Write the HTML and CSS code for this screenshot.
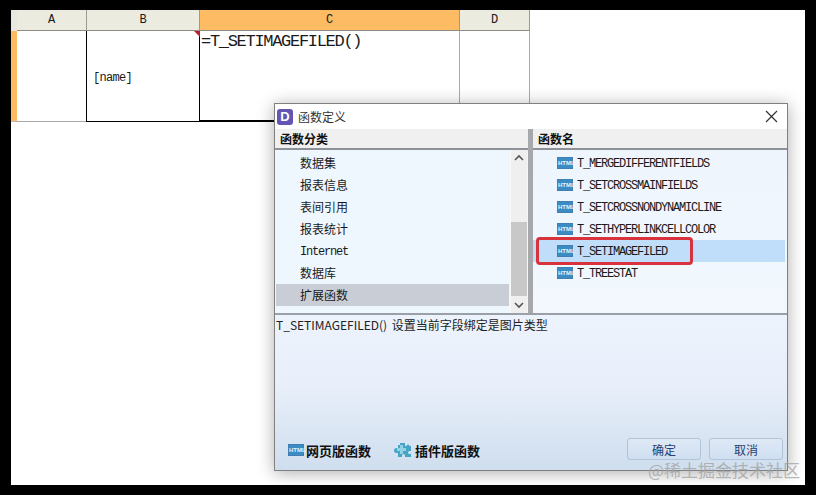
FILE: index.html
```html
<!DOCTYPE html>
<html lang="en">
<head>
    <meta charset="UTF-8">
    <title>函数定义</title>
    <link rel="stylesheet" href="styles.css">
</head>
<body>
    <div class="screen">
        <!-- Sheet behind the dialog -->
        <div class="sheet">
            <div class="corner"></div>
            <div class="col-head">A</div>
            <div class="col-head">B</div>
            <div class="col-head active">C</div>
            <div class="col-head">D</div>
            <div class="row-head"></div>
            <div class="cell"></div>
            <div class="cell name-cell">[name]</div>
            <div class="cell formula-cell">=T_SETIMAGEFILED()<span class="flag"></span></div>
            <div class="cell"></div>
        </div>

        <!-- Function dialog -->
        <div class="dialog">
            <div class="title-bar">
                <span class="logo">D</span>
                <span class="title">函数定义</span>
                <svg class="close" width="13" height="13" viewBox="0 0 13 13">
                    <path d="M1 1L12 12M12 1L1 12" stroke="#333" stroke-width="1.2" fill="none"/>
                </svg>
            </div>
            <div class="panels">
                <div class="panel left-panel">
                    <div class="panel-head">函数分类</div>
                    <div class="list-wrap">
                        <ul class="list">
                            <li>数据集</li>
                            <li>报表信息</li>
                            <li>表间引用</li>
                            <li>报表统计</li>
                            <li class="latin">Internet</li>
                            <li>数据库</li>
                            <li class="selected">扩展函数</li>
                        </ul>
                        <div class="scrollbar">
                            <svg width="16" height="16" viewBox="0 0 16 16"><path d="M4 10L8 6L12 10" stroke="#555" stroke-width="1.6" fill="none"/></svg>
                            <div class="thumb"></div>
                            <svg width="16" height="16" viewBox="0 0 16 16"><path d="M4 6L8 10L12 6" stroke="#555" stroke-width="1.6" fill="none"/></svg>
                        </div>
                    </div>
                </div>
                <div class="splitter"></div>
                <div class="panel right-panel">
                    <div class="panel-head">函数名</div>
                    <ul class="list names">
                        <li><span class="html-icon">HTML</span>T_MERGEDIFFERENTFIELDS</li>
                        <li><span class="html-icon">HTML</span>T_SETCROSSMAINFIELDS</li>
                        <li><span class="html-icon">HTML</span>T_SETCROSSNONDYNAMICLINE</li>
                        <li><span class="html-icon">HTML</span>T_SETHYPERLINKCELLCOLOR</li>
                        <li class="current"><span class="html-icon">HTML</span>T_SETIMAGEFILED<span class="red-box"></span></li>
                        <li><span class="html-icon">HTML</span>T_TREESTAT</li>
                    </ul>
                </div>
            </div>
            <div class="bottom">
                <p class="desc">T_SETIMAGEFILED() 设置当前字段绑定是图片类型</p>
                <div class="actions">
                    <a class="link"><span class="html-icon">HTML</span>网页版函数</a>
                    <a class="link plugin">
                        <svg width="17" height="16" viewBox="0 0 17 16">
                            <path d="M6 1h5v3h1.500a1.500 1.500 0 0 1 3 0H17v5h-1.500a1.500 1.500 0 0 0 0 3H17v3h-6v-1.500a1.500 1.500 0 0 0-3 0V15H4v-4H2.500a2 2 0 0 1 0-5H4V3h2z" fill="#46a4c6"/>
                            <path d="M6 3h3v3h3v3H9v3H6V9H3V6h3z" fill="#8fd2e6"/>
                        </svg>
                        插件版函数
                    </a>
                    <div class="buttons">
                        <button>确定</button>
                        <button>取消</button>
                    </div>
                </div>
            </div>
        </div>

        <div class="watermark">@稀土掘金技术社区</div>
    </div>
</body>
</html>
```

FILE: styles.css
```css
body {
    margin: 0;
    padding: 10px 11px;
    height: 495px;
    box-sizing: border-box;
    background-color: #000;
    font-family: "Noto Sans CJK SC", sans-serif;
    font-size: 12px;
    color: #1a1a1a;
    overflow: hidden;
}

.screen {
    position: relative;
    width: 794px;
    height: 475px;
    background-color: #fff;
    overflow: hidden;
}

/* Sheet */
.sheet {
    display: grid;
    grid-template-columns: 6px 70px 113px 260px 70px;
    grid-template-rows: 21px 91px;
    width: 519px;
    font-family: "Liberation Mono", monospace;
}

.corner {
    background-color: #e8e8e0;
}

.col-head {
    display: flex;
    align-items: center;
    justify-content: center;
    background-color: #ebebe0;
    border-right: 1px solid #9a9a90;
    border-bottom: 1px solid #8c8c84;
    font-size: 12px;
}

.col-head.active {
    background-color: #fdbb63;
}

.row-head {
    background-color: #fdbb63;
    border-bottom: 1px solid #bbb;
}

.cell {
    position: relative;
    border-right: 1px solid #aaa;
    border-bottom: 1px solid #aaa;
}

.name-cell {
    display: flex;
    align-items: center;
    padding: 3px 0 0 6px;
    font-size: 12px;
    letter-spacing: -.7px;
    border-left: 1px solid #000;
    border-right: 1px solid #000;
    border-bottom: 1px solid #000;
    margin-left: -1px;
}

.formula-cell {
    padding: 1px 0 0 1px;
    font-size: 17px;
    line-height: 20px;
    letter-spacing: -1.300px;
    border-bottom: 2px solid #000;
}

.flag {
    position: absolute;
    top: 0;
    left: -6px;
    border-top: 6px solid #b8202c;
    border-left: 6px solid transparent;
}

/* Dialog */
.dialog {
    position: absolute;
    left: 263px;
    top: 93px;
    width: 514px;
    height: 368px;
    box-sizing: border-box;
    display: flex;
    flex-direction: column;
    border: 1px solid #808080;
    background-color: #fff;
    box-shadow: 0 2px 16px rgba(0, 0, 0, .32);
}

.title-bar {
    display: flex;
    align-items: center;
    height: 25px;
    flex-shrink: 0;
    padding-left: 2px;
}

.logo {
    width: 16px;
    height: 16px;
    margin-right: 5px;
    border-radius: 3px;
    background-color: #6454b4;
    color: #fff;
    font-family: "Liberation Sans", sans-serif;
    font-weight: bold;
    font-size: 13px;
    line-height: 16px;
    text-align: center;
}

.title {
    font-size: 12px;
    color: #333;
}

.close {
    margin-left: auto;
    margin-right: 9px;
}

.panels {
    display: flex;
    height: 186px;
    flex-shrink: 0;
    border-bottom: 2px solid #9aa0a8;
    box-sizing: border-box;
}

.panel {
    display: flex;
    flex-direction: column;
    width: 254px;
}

.left-panel {
    width: 253px;
}

.right-panel {
    flex: 1;
}

.splitter {
    width: 5px;
    background-color: #a6a8ac;
}

.panel-head {
    height: 19px;
    padding-left: 5px;
    flex-shrink: 0;
    background-color: #f0f0f0;
    border-bottom: 2px solid #8e9298;
    font-size: 12px;
    font-weight: bold;
    line-height: 19px;
    color: #111;
}

.list-wrap {
    flex: 1;
    display: flex;
    min-height: 0;
    background-color: #eef6fe;
}

.list {
    flex: 1;
    margin: 0;
    padding: 2px 1px 0 1px;
    list-style: none;
    background-color: #eef6fe;
}

.list li {
    position: relative;
    display: flex;
    align-items: center;
    box-sizing: border-box;
    height: 22px;
    padding: 0 0 2px 24px;
    font-size: 12px;
}

.list .latin {
    padding-top: 2px;
    padding-bottom: 0;
    font-family: "Liberation Mono", monospace;
    font-size: 12px;
    letter-spacing: -1.200px;
}

.list .selected {
    background-color: #c9ced6;
}

.scrollbar {
    display: flex;
    flex-direction: column;
    width: 16px;
    margin-right: 1px;
    background-color: #efefef;
    border-left: 1px solid #f8f8f8;
}

.thumb {
    margin-top: auto;
    height: 74px;
    background-color: #c8c8c8;
}

.scrollbar svg + .thumb + svg {
    margin-top: 1px;
}

.list.names {
    padding: 2px 2px 0 0;
    background: linear-gradient(#eef5fd, #f2f8fe);
}

.names li {
    padding: 2px 0 0 24px;
    font-family: "Liberation Mono", monospace;
    font-size: 12px;
    letter-spacing: -1.200px;
}

.list .current {
    background-color: #c0defa;
}

.html-icon {
    flex-shrink: 0;
    width: 16px;
    height: 12px;
    margin: -2px 4px 0 0;
    box-sizing: border-box;
    border: 1px solid #3f7fb5;
    background-color: #3c8cc4;
    color: #e4f4ff;
    font-family: "Liberation Sans", sans-serif;
    font-size: 6px;
    font-weight: bold;
    letter-spacing: 0;
    line-height: 10px;
    text-align: center;
}

.red-box {
    position: absolute;
    left: 3px;
    top: -3px;
    width: 157px;
    height: 28px;
    box-sizing: border-box;
    border: 3px solid #d8333c;
    border-radius: 4px;
}

.bottom {
    flex: 1;
    display: flex;
    flex-direction: column;
    background: linear-gradient(#edf3fd, #e8effa 45%, #cfdeee);
}

.desc {
    margin: 1px 0 0 1px;
    font-size: 12px;
    line-height: 18px;
    word-spacing: 2px;
    color: #222;
}

.actions {
    display: flex;
    align-items: center;
    margin-top: auto;
    padding: 0 4px 10px 13px;
}

.link {
    display: flex;
    align-items: center;
    padding-top: 2px;
    font-size: 13px;
    font-weight: bold;
    color: #111;
}

.link .html-icon {
    margin: 0 2px 0 0;
}

.plugin {
    margin-left: 23px;
}

.plugin svg {
    margin-right: 4px;
}

.buttons {
    display: flex;
    gap: 8px;
    margin-left: auto;
}

button {
    width: 74px;
    height: 22px;
    padding: 0;
    border: 1px solid #b4c4d8;
    border-radius: 3px;
    background: linear-gradient(#dfe9f6, #cfdff1);
    font-family: "Noto Sans CJK SC", sans-serif;
    font-size: 12px;
    color: #25406e;
}

.watermark {
    position: absolute;
    right: 5px;
    bottom: 5px;
    font-size: 17px;
    line-height: 20px;
    color: rgba(160, 160, 160, .75);
}
```
